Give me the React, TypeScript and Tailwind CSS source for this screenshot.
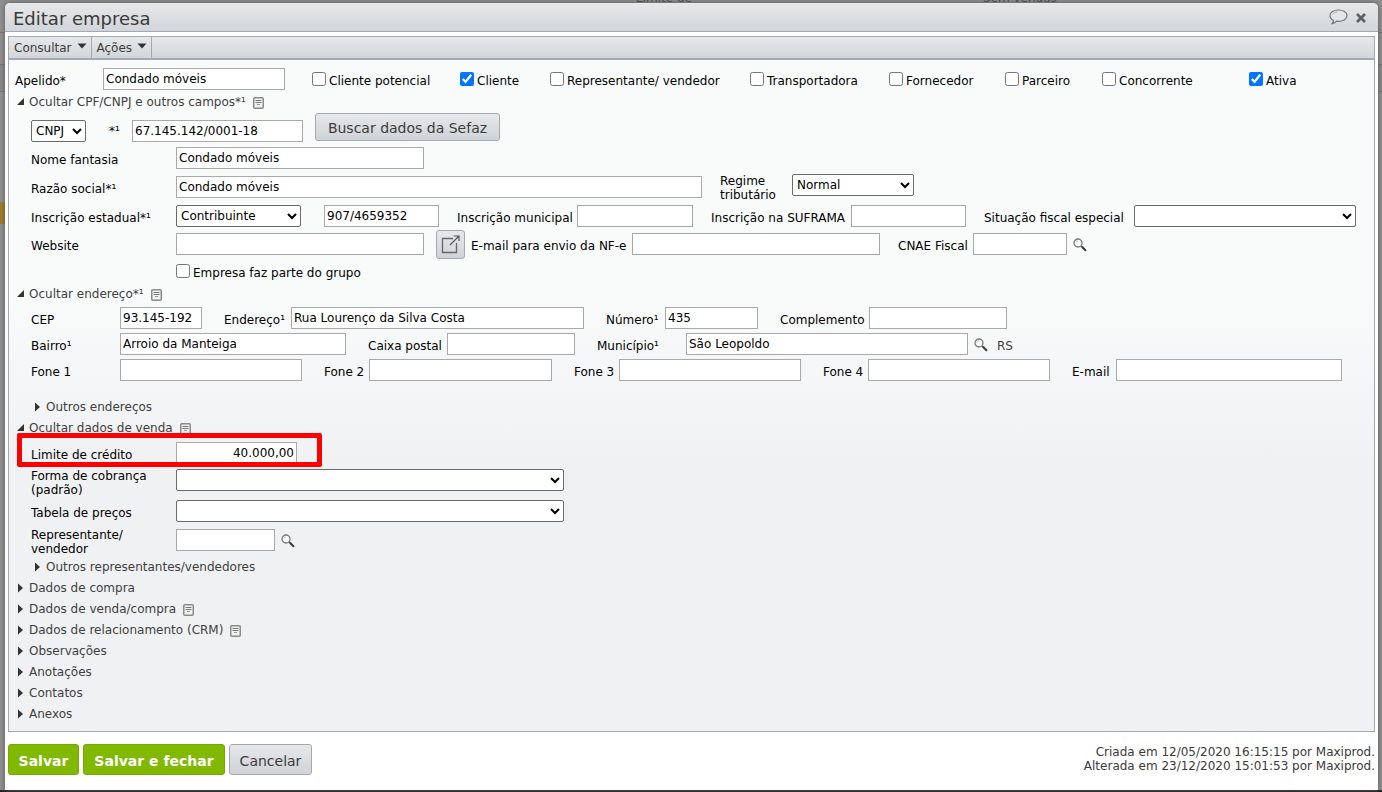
import { ReactNode, useState } from 'react';
import clsx from 'clsx';

type FieldProps = {
  id: string;
  label: ReactNode;
  labelClass: string;
  inputClass: string;
  value?: string;
};

const inputBase = 'h-[22px] shrink-0 border border-[#a9a9a9] bg-white px-0.5 text-black outline-none focus:border-[#5b9dd9]';
const selectBase = 'h-[22px] shrink-0 rounded-xs border border-[#6b6b6b] bg-white text-black outline-none';
const grayButton = 'rounded-[3px] border border-[#a3a9b2] bg-linear-to-b from-[#e6e8ea] to-[#d0d3d7] text-[#3c3c3c]';

function Field({ id, label, labelClass, inputClass, value = '' }: FieldProps) {
  return (
    <>
      <label htmlFor={id} className={clsx('shrink-0 whitespace-nowrap pt-[3px] leading-5', labelClass)}>{label}</label>
      <input id={id} type="text" defaultValue={value} className={clsx(inputBase, inputClass)} />
    </>
  );
}

function SelectField({ id, label, labelClass, inputClass, value = '' }: FieldProps) {
  return (
    <>
      <label htmlFor={id} className={clsx('shrink-0', labelClass)}>{label}</label>
      <select id={id} defaultValue={value} className={clsx(selectBase, inputClass)}>
        <option>{value}</option>
      </select>
    </>
  );
}

function Check({ id, label, className, checked = false }: { id: string; label: string; className: string; checked?: boolean }) {
  return (
    <div className={clsx('flex shrink-0 items-center', className)}>
      <input id={id} type="checkbox" defaultChecked={checked} className="size-3.5 accent-[#0075ff]" />
      <label htmlFor={id} className="whitespace-nowrap pt-[3px] pl-[3px]">{label}</label>
    </div>
  );
}

function NoteIcon() {
  return (
    <svg width="11" height="12" viewBox="0 0 11 12" className="mt-0.5 ml-[7px]" aria-hidden="true">
      <rect x="0.75" y="0.75" width="9.5" height="10.5" rx="1" fill="#f1f1ef" stroke="#8b8b8b" strokeWidth="1.5" />
      <path d="M2.5 3.5h6M2.5 5.5h6" stroke="#777" strokeWidth="1" />
      <path d="M4 7.5h3" stroke="#999" strokeWidth="1" />
    </svg>
  );
}

function SearchButton({ name }: { name: string }) {
  return (
    <button type="button" aria-label={name} className="ml-1.5 flex h-[22px] shrink-0 items-center pt-px">
      <svg width="14" height="14" viewBox="0 0 14 14" fill="none">
        <circle cx="5" cy="5" r="4" fill="#fbfbfb" stroke="#7a7a7a" strokeWidth="1.3" />
        <path d="M3 4.5A2.2 2.2 0 0 1 5 2.8" stroke="#c9c9c9" strokeWidth="1" />
        <path d="M8 8l2 1.6" stroke="#555" strokeWidth="1.4" />
        <path d="M9.4 9.2l3 3" stroke="#3a3a3a" strokeWidth="2" strokeLinecap="round" />
      </svg>
    </button>
  );
}

function Toggle({ title, open = false, note = false, nested = false }: { title: string; open?: boolean; note?: boolean; nested?: boolean }) {
  return (
    <div className={clsx('flex h-[21px] items-center', nested ? 'pl-[25px]' : 'pl-2')}>
      <button type="button" aria-expanded={open} className="flex items-center text-[#3f3f3f]">
        <svg width="8" height="10" viewBox="0 0 8 10" className="mr-1" aria-hidden="true">
          {open ? <path d="M7 1v7H0z" fill="#333" /> : <path d="M1 0.5v9L6 5z" fill="#333" />}
        </svg>
        {title}
      </button>
      {note && <NoteIcon />}
    </div>
  );
}

function MenuButton({ title }: { title: string }) {
  return (
    <button type="button" className="flex items-center gap-[5px] border-r border-[#a3a9b2] pr-1 pl-[5px] text-[#3c3c3c]">
      {title}
      <svg width="10" height="6" viewBox="0 0 10 6" className="mb-1" aria-hidden="true">
        <path d="M0.5 0.5h9L5 5.5z" fill="#333" />
      </svg>
    </button>
  );
}

function Backdrop() {
  return (
    <div className="absolute inset-0 overflow-hidden bg-[#909090] text-[#4a4a4a]" aria-hidden="true">
      <span className="absolute -top-2 left-[636px] leading-3">Limite de</span>
      <span className="absolute -top-2 left-[983px] leading-3">Sem vendas</span>
      <div className="absolute top-[202px] left-0 h-[22px] w-[5px] bg-[#a07d28]" />
      <div className="absolute top-8 h-px w-full bg-[#777]" />
      <div className="absolute top-16 h-7 w-full border-y border-[#777] bg-[#8a8a8a]" />
    </div>
  );
}

export default function App() {
  const [visible, setVisible] = useState(true);

  return (
    <div className="relative border-b-2 border-[#262324] pt-[3px] pr-1 pl-[5px] font-['DejaVu_Sans',Verdana,sans-serif] text-[12px] leading-[14px] text-black">
      <Backdrop />
      {visible && (
        <div role="dialog" aria-labelledby="titulo" className="relative rounded-t-[5px] bg-white shadow-[0_0_5px_#555]">
          <header className="flex h-[29px] items-center justify-between rounded-t-[5px] border-b border-[#a3a9b2] bg-linear-to-b from-[#e7e8e9] to-[#d2d5d9] pr-3 pl-2">
            <h1 id="titulo" className="pt-1 text-[18px] leading-6 text-[#3a3a3a]">Editar empresa</h1>
            <div className="flex items-center gap-2">
              <button type="button" aria-label="Comentários">
                <svg width="19" height="16" viewBox="0 0 19 16" fill="none">
                  <path d="M9.5 1C4.8 1 1 3.3 1 6.6c0 2.2 1.4 3.900 3.500 4.900-.1 1.200-.6 2.300-1.300 3.200 1.800-.3 3.300-1.200 4.300-2.500.6.1 1.300.1 2 .1 4.700 0 8.500-2.400 8.500-5.700S14.200 1 9.500 1z" fill="#e4e5e7" stroke="#777" strokeWidth="1.2" />
                  <path d="M3.5 5.5c.9-1.5 2.6-2.3 4.5-2.6" stroke="#aaa" />
                </svg>
              </button>
              <button type="button" aria-label="Fechar" onClick={() => setVisible(false)} className="pt-px">
                <svg width="10" height="10" viewBox="0 0 10 10">
                  <path d="M1 1l8 8M9 1l-8 8" stroke="#606060" strokeWidth="2.6" />
                </svg>
              </button>
            </div>
          </header>

          <form onSubmit={(e) => e.preventDefault()} className="px-[3px] pt-1">
            <div className="border border-[#a3a9b2]">
              <nav className="flex h-[23px] border-b-2 border-[#a3a9b2] bg-linear-to-b from-[#e6e8e9] to-[#d3d6da]">
                <MenuButton title="Consultar" />
                <MenuButton title="Ações" />
              </nav>

              <div className="bg-linear-to-b from-[#f9fbfb] from-35% to-[#f0f1f3] to-60% pt-2 pb-[7px]">
                <div className="flex h-[22px] pl-1.5">
                  <Field id="apelido" label="Apelido*" labelClass="w-[88px]" inputClass="mr-[27px] w-[182px]" value="Condado móveis" />
                  <Check id="potencial" label="Cliente potencial" className="w-[148px]" />
                  <Check id="cliente" label="Cliente" className="w-[90px]" checked />
                  <Check id="repr" label="Representante/ vendedor" className="w-[200px]" />
                  <Check id="transp" label="Transportadora" className="w-[139px]" />
                  <Check id="fornecedor" label="Fornecedor" className="w-[116px]" />
                  <Check id="parceiro" label="Parceiro" className="w-[97px]" />
                  <Check id="concorrente" label="Concorrente" className="w-[147px]" />
                  <Check id="ativa" label="Ativa" className="w-14" checked />
                </div>

                {/* CPF/CNPJ */}
                <div className="pt-px"><Toggle title="Ocultar CPF/CNPJ e outros campos*¹" open note /></div>
                <div className="mt-px flex h-[29px] items-end pl-[22px]">
                  <select aria-label="Tipo de documento" className={clsx(selectBase, 'w-[55px]')}>
                    <option>CNPJ</option>
                    <option>CPF</option>
                  </select>
                  <label htmlFor="cnpj" className="w-[46px] shrink-0 pb-1 pl-[23px]">*¹</label>
                  <input id="cnpj" type="text" defaultValue="67.145.142/0001-18" className={clsx(inputBase, 'w-[171px]')} />
                  <button type="button" className={clsx(grayButton, 'ml-3 h-7 w-[185px] shrink-0 self-start pt-0.5 text-[14px] whitespace-nowrap')}>
                    Buscar dados da Sefaz
                  </button>
                </div>
                <div className="mt-[5px] flex h-[22px] pl-[22px]">
                  <Field id="fantasia" label="Nome fantasia" labelClass="w-[145px]" inputClass="w-[248px]" value="Condado móveis" />
                </div>
                <div className="mt-[7px] flex h-[22px] pl-[22px]">
                  <Field id="razao" label="Razão social*¹" labelClass="w-[145px]" inputClass="w-[526px]" value="Condado móveis" />
                  <SelectField id="regime" label={<>Regime<br />tributário</>} labelClass="ml-[18px] w-[72px] -mt-0.5" inputClass="-mt-0.5 w-[122px]" value="Normal" />
                </div>
                <div className="mt-[7px] flex h-[22px] pl-[22px]">
                  <SelectField id="ie" label="Inscrição estadual*¹" labelClass="w-[145px] pt-[3px] leading-5 whitespace-nowrap" inputClass="w-[125px]" value="Contribuinte" />
                  <input aria-label="Número da inscrição estadual" type="text" defaultValue="907/4659352" className={clsx(inputBase, 'ml-[23px] w-[115px]')} />
                  <Field id="im" label="Inscrição municipal" labelClass="ml-[18px] w-[120px]" inputClass="w-[116px]" />
                  <Field id="suframa" label="Inscrição na SUFRAMA" labelClass="ml-[18px] w-[140px]" inputClass="w-[115px]" />
                  <SelectField id="situacao" label="Situação fiscal especial" labelClass="ml-[18px] w-[150px] pt-[3px] leading-5 whitespace-nowrap" inputClass="w-[222px]" />
                </div>
                <div className="mt-1.5 flex h-[22px] pl-[22px]">
                  <Field id="website" label="Website" labelClass="w-[145px]" inputClass="w-[248px]" />
                  <button type="button" aria-label="Abrir website" className={clsx(grayButton, '-my-[3px] mr-1.5 ml-3 flex h-[29px] w-[29px] shrink-0 items-center justify-center')}>
                    <svg width="19" height="19" viewBox="0 0 19 19" fill="none">
                      <path d="M12 3.5H1.500v14h14V8" stroke="#666" strokeWidth="1.300" />
                      <path d="M9 10L17.500 1.500M12.500 1h5.500v5" stroke="#555" strokeWidth="1.200" />
                    </svg>
                  </button>
                  <Field id="nfe" label="E-mail para envio da NF-e" labelClass="w-[161px]" inputClass="w-[248px]" />
                  <Field id="cnae" label="CNAE Fiscal" labelClass="ml-[18px] w-[75px]" inputClass="w-[94px]" />
                  <SearchButton name="Buscar CNAE" />
                </div>
                <div className="mt-[5px] mb-px flex h-[22px] pl-[167px]">
                  <Check id="grupo" label="Empresa faz parte do grupo" className="" />
                </div>

                {/* Endereço */}
                <Toggle title="Ocultar endereço*¹" open note />
                <div className="mt-[3px] flex h-[22px] pl-[22px]">
                  <Field id="cep" label="CEP" labelClass="w-[89px]" inputClass="w-[82px]" value="93.145-192" />
                  <Field id="endereco" label="Endereço¹" labelClass="ml-[22px] w-[67px]" inputClass="w-[293px]" value="Rua Lourenço da Silva Costa" />
                  <Field id="numero" label="Número¹" labelClass="ml-[22px] w-[59px]" inputClass="w-[93px]" value="435" />
                  <Field id="complemento" label="Complemento" labelClass="ml-[22px] w-[89px]" inputClass="w-[138px]" />
                </div>
                <div className="mt-1 flex h-[22px] pl-[22px]">
                  <Field id="bairro" label="Bairro¹" labelClass="w-[89px]" inputClass="w-[226px]" value="Arroio da Manteiga" />
                  <Field id="caixa" label="Caixa postal" labelClass="ml-[22px] w-[79px]" inputClass="w-[128px]" />
                  <Field id="municipio" label="Município¹" labelClass="ml-[22px] w-[89px]" inputClass="w-[282px]" value="São Leopoldo" />
                  <SearchButton name="Buscar município" />
                  <span className="pt-[3px] pl-[9px] leading-5 text-[#3f3f3f]">RS</span>
                </div>
                <div className="mt-1 flex h-[22px] pl-[22px]">
                  <Field id="fone1" label="Fone 1" labelClass="w-[89px]" inputClass="w-[182px]" />
                  <Field id="fone2" label="Fone 2" labelClass="ml-[22px] w-[45px]" inputClass="w-[183px]" />
                  <Field id="fone3" label="Fone 3" labelClass="ml-[22px] w-[45px]" inputClass="w-[182px]" />
                  <Field id="fone4" label="Fone 4" labelClass="ml-[22px] w-[45px]" inputClass="w-[182px]" />
                  <Field id="email" label="E-mail" labelClass="ml-[22px] w-11" inputClass="w-[226px]" />
                </div>
                <div className="pt-[15px]"><Toggle title="Outros endereços" nested /></div>

                {/* Dados de venda */}
                <Toggle title="Ocultar dados de venda" open note />
                <div className="relative mt-1 flex h-[22px] pl-[22px]">
                  <Field id="limite" label="Limite de crédito" labelClass="w-[145px]" inputClass="w-[121px] text-right" value="40.000,00" />
                  <div className="pointer-events-none absolute -top-[9px] left-2 h-[34px] w-[305px] rounded-xs border-5 border-[#ff0000]" />
                </div>
                <div className="mt-[5px] flex h-[22px] pl-[22px]">
                  <SelectField id="cobranca" label={<>Forma de cobrança<br />(padrão)</>} labelClass="w-[145px]" inputClass="w-[388px]" />
                </div>
                <div className="mt-[9px] flex h-[22px] pl-[22px]">
                  <SelectField id="precos" label="Tabela de preços" labelClass="w-[145px] pt-[3px] leading-5" inputClass="w-[388px]" />
                </div>
                <div className="mt-[7px] flex h-[22px] pl-[22px]">
                  <label htmlFor="representante" className="-mt-px w-[145px] shrink-0">Representante/<br />vendedor</label>
                  <input id="representante" type="text" className={clsx(inputBase, 'w-[99px]')} />
                  <SearchButton name="Buscar representante" />
                </div>
                <div className="pt-[5px]"><Toggle title="Outros representantes/vendedores" nested /></div>

                <Toggle title="Dados de compra" />
                <Toggle title="Dados de venda/compra" note />
                <Toggle title="Dados de relacionamento (CRM)" note />
                <Toggle title="Observações" />
                <Toggle title="Anotações" />
                <Toggle title="Contatos" />
                <Toggle title="Anexos" />
              </div>
            </div>

            <footer className="flex items-start justify-between pt-3 pb-[15px]">
              <div className="flex gap-1 text-[14px]">
                <button type="submit" className="h-[31px] w-[71px] rounded-[3px] border border-[#76a800] bg-[#80b900] pt-0.5 font-bold text-white">Salvar</button>
                <button type="submit" className="h-[31px] w-[142px] rounded-[3px] border border-[#76a800] bg-[#80b900] pt-0.5 font-bold text-white">Salvar e fechar</button>
                <button type="button" className={clsx(grayButton, 'h-[31px] w-[83px] pt-0.5')}>Cancelar</button>
              </div>
              <p className="pt-px text-right text-[#3a3a3a]">
                Criada em 12/05/2020 16:15:15 por Maxiprod.<br />
                Alterada em 23/12/2020 15:01:53 por Maxiprod.
              </p>
            </footer>
          </form>
        </div>
      )}
    </div>
  );
}
